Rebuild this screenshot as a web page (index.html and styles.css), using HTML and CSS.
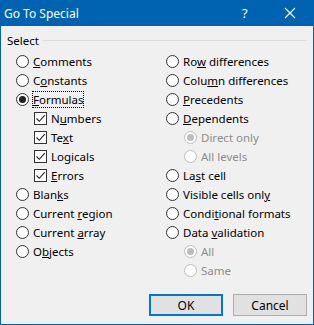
FILE: index.html
```html
<!DOCTYPE html>
<html lang="en">

<head>
  <meta charset="utf-8">
  <title>Go To Special</title>
  <link rel="stylesheet" href="styles.css">
</head>

<body>
  <div class="dialog">
    <div class="titlebar">
      <span class="title">Go To Special</span>
      <span class="help">?</span>
      <svg class="close" width="12" height="12" viewBox="0 0 12 12">
        <path d="M1 1 L11 11 M11 1 L1 11" stroke="#fff" stroke-width="1.1" fill="none" />
      </svg>
    </div>

    <div class="content">
      <div class="group-head">
        <span>Select</span>
        <div class="rule"></div>
      </div>

      <div class="options">
        <div class="col">
          <div class="opt"><span class="radio"></span><span><u>C</u>omments</span></div>
          <div class="opt"><span class="radio"></span><span>C<u>o</u>nstants</span></div>
          <div class="opt"><span class="radio checked"></span><span class="focus"><u>F</u>ormulas</span></div>
          <div class="opt sub"><span class="check"><svg width="11" height="11" viewBox="0 0 11 11"><path d="M1.5 5.5 L4.3 8.3 L9.8 2.2" stroke="#222" stroke-width="1.1" fill="none" /></svg></span><span>N<u>u</u>mbers</span></div>
          <div class="opt sub"><span class="check"><svg width="11" height="11" viewBox="0 0 11 11"><path d="M1.5 5.5 L4.3 8.3 L9.8 2.2" stroke="#222" stroke-width="1.1" fill="none" /></svg></span><span>Te<u>x</u>t</span></div>
          <div class="opt sub"><span class="check"><svg width="11" height="11" viewBox="0 0 11 11"><path d="M1.5 5.5 L4.3 8.3 L9.8 2.2" stroke="#222" stroke-width="1.1" fill="none" /></svg></span><span>Lo<u>g</u>icals</span></div>
          <div class="opt sub"><span class="check"><svg width="11" height="11" viewBox="0 0 11 11"><path d="M1.5 5.5 L4.3 8.3 L9.8 2.2" stroke="#222" stroke-width="1.1" fill="none" /></svg></span><span><u>E</u>rrors</span></div>
          <div class="opt"><span class="radio"></span><span>Blan<u>k</u>s</span></div>
          <div class="opt"><span class="radio"></span><span>Current <u>r</u>egion</span></div>
          <div class="opt"><span class="radio"></span><span>Current <u>a</u>rray</span></div>
          <div class="opt"><span class="radio"></span><span>O<u>b</u>jects</span></div>
        </div>
        <div class="col">
          <div class="opt"><span class="radio"></span><span>Ro<u>w</u> differences</span></div>
          <div class="opt"><span class="radio"></span><span>Colu<u>m</u>n differences</span></div>
          <div class="opt"><span class="radio"></span><span><u>P</u>recedents</span></div>
          <div class="opt"><span class="radio"></span><span><u>D</u>ependents</span></div>
          <div class="opt sub disabled"><span class="radio checked"></span><span>Direct only</span></div>
          <div class="opt sub disabled"><span class="radio"></span><span>All levels</span></div>
          <div class="opt"><span class="radio"></span><span>La<u>s</u>t cell</span></div>
          <div class="opt"><span class="radio"></span><span>Visible cells onl<u>y</u></span></div>
          <div class="opt"><span class="radio"></span><span>Condi<u>t</u>ional formats</span></div>
          <div class="opt"><span class="radio"></span><span>Data <u>v</u>alidation</span></div>
          <div class="opt sub disabled"><span class="radio checked"></span><span>All</span></div>
          <div class="opt sub disabled"><span class="radio"></span><span>Same</span></div>
        </div>
      </div>

      <div class="buttons">
        <button class="btn default">OK</button>
        <button class="btn">Cancel</button>
      </div>
    </div>
  </div>
</body>

</html>
```

FILE: styles.css
```css
body,
html {
  margin: 0;
  padding: 0;
  background: #f0f0f0;
  font-family: "Segoe UI", "Noto Sans", Arial, sans-serif;
  font-size: 11.5px;
  color: #000;
}

.dialog {
  width: 314px;
  height: 325px;
  box-sizing: border-box;
  border: 1px solid #0063b1;
  border-top: none;
  background: #f0f0f0;
  display: flex;
  flex-direction: column;
}

.titlebar {
  height: 26px;
  background: #0063b1;
  color: white;
  display: flex;
  align-items: center;
  padding-left: 3px;
  font-size: 12px;
}

.title {
  flex: 1;
}

.help {
  width: 12px;
  margin-right: 30px;
  font-size: 13px;
}

.close {
  margin-right: 17px;
}

.content {
  flex: 1;
  display: flex;
  flex-direction: column;
}

.group-head {
  display: flex;
  align-items: center;
  height: 16px;
  margin-top: 6px;
  padding-left: 6px;
  padding-right: 6px;
}

.rule {
  flex: 1;
  height: 1px;
  background: #dcdcdc;
  margin-left: 4px;
}

.options {
  display: flex;
  margin-top: 4px;
  padding-left: 15px;
}

.col {
  display: flex;
  flex-direction: column;
}

.col:first-child {
  width: 150px;
}

.opt {
  height: 19px;
  display: flex;
  align-items: center;
  gap: 4px;
  white-space: nowrap;
}

.opt.sub {
  padding-left: 18px;
}

.opt.disabled {
  color: #8d8d8d;
}

.radio {
  width: 13px;
  height: 13px;
  box-sizing: border-box;
  border: 1px solid #333;
  border-radius: 50%;
  background: white;
  display: flex;
  align-items: center;
  justify-content: center;
}

.radio.checked::after {
  content: "";
  width: 7px;
  height: 7px;
  border-radius: 50%;
  background: #222;
}

.disabled .radio {
  border-color: #bcbcbc;
}

.disabled .radio.checked::after {
  background: #bcbcbc;
}

.check {
  width: 13px;
  height: 13px;
  box-sizing: border-box;
  border: 1px solid #333;
  background: white;
  display: flex;
  align-items: center;
  justify-content: center;
}

.focus {
  outline: 1px dotted #000;
  outline-offset: 0;
}

.buttons {
  display: flex;
  justify-content: flex-end;
  gap: 10px;
  margin-top: 14px;
  padding-right: 6px;
}

.btn {
  width: 74px;
  height: 22px;
  box-sizing: border-box;
  background: #e1e1e1;
  border: 1px solid #adadad;
  font-family: "Segoe UI", "Noto Sans", Arial, sans-serif;
  font-size: 12px;
  color: #000;
  padding: 0;
}

.btn.default {
  border: 2px solid #0078d7;
}
```
